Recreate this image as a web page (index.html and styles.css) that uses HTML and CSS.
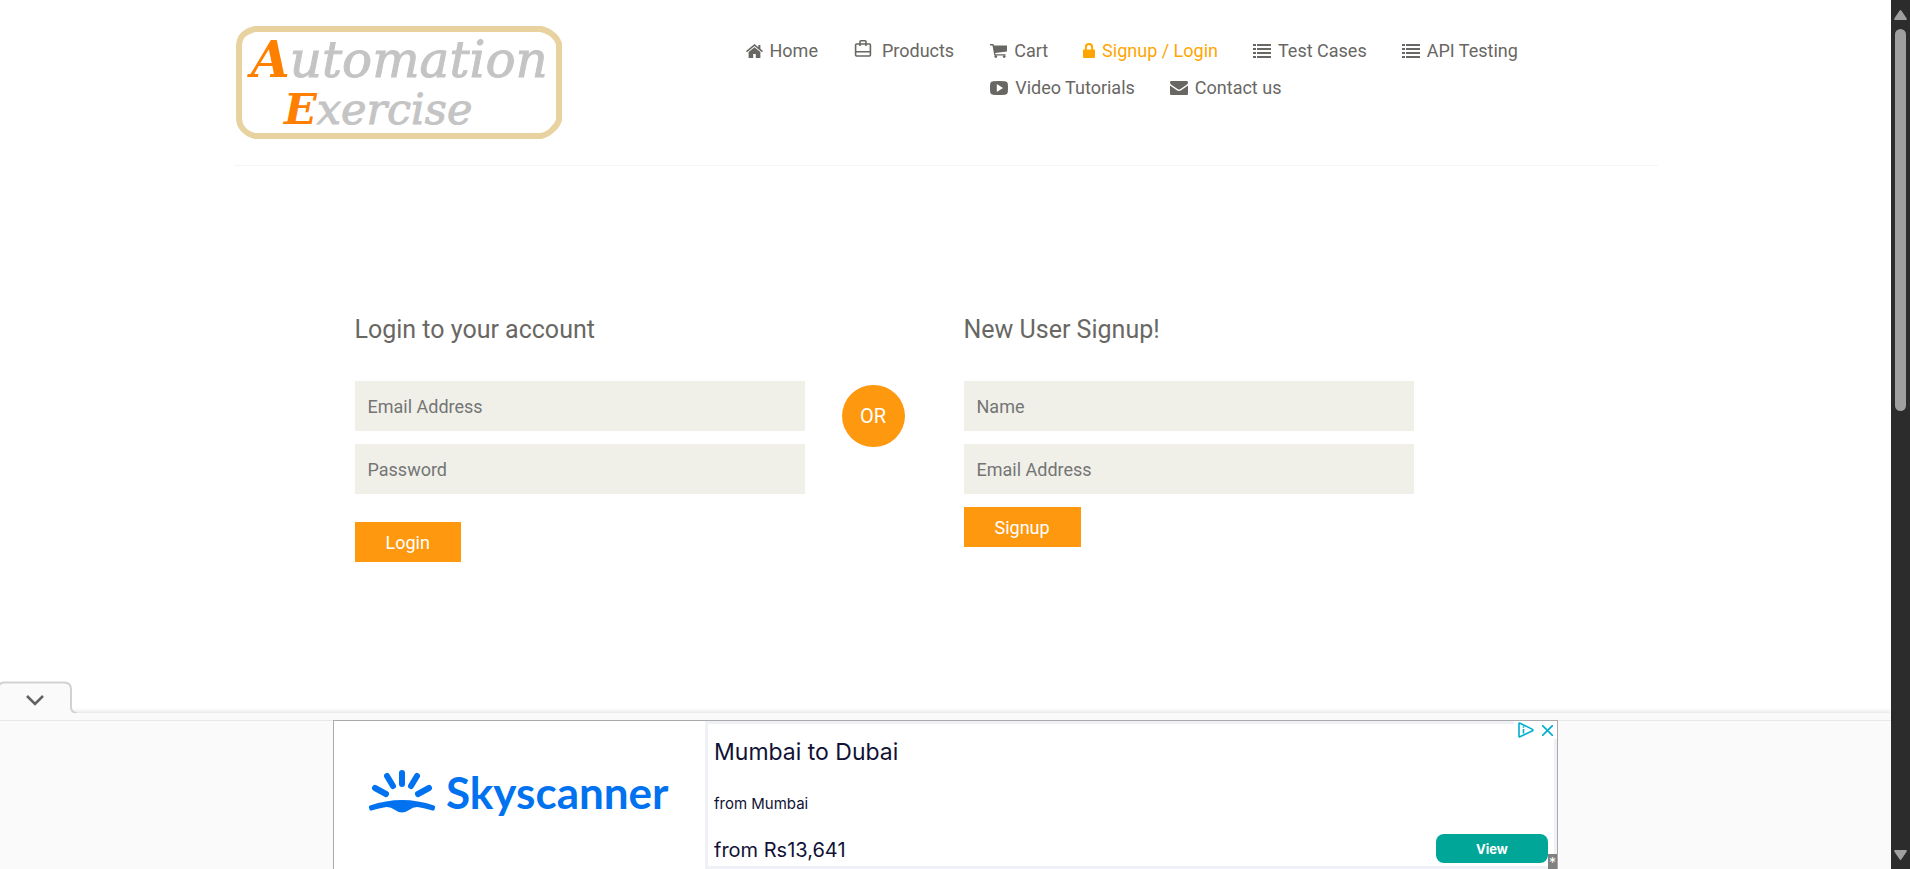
FILE: index.html
```html
<!DOCTYPE html>
<html lang="en">
<head>
<meta charset="utf-8">
<meta name="viewport" content="width=device-width, initial-scale=1">
<title>Automation Exercise - Signup / Login</title>
<link rel="stylesheet" href="styles.css">
</head>
<body>
<svg class="sprite" aria-hidden="true">
  <symbol id="i-list" viewBox="0 0 18 14"><path d="M0 0h3v2H0zM4 0h14v2H4zM0 4h3v2H0zM4 4h14v2H4zM0 8h3v2H0zM4 8h14v2H4zM0 12h3v2H0zM4 12h14v2H4z"/></symbol>
</svg>
<div class="window">
  <div class="page">
    <header class="header container">
      <a class="logo" href="#" aria-label="Automation Exercise">
        <svg width="329" height="115" viewBox="0 0 329 115">
          <path class="logo-frame" d="M21 4h286q8 2 12 6 4 3 6 9v76q-2 6-6 9-4 5-12 7H21q-8-2-12-7-4-4-4-12V22q0-8 4-12 4-4 12-6z"/>
          <text class="logo-text logo-text-top" x="17" y="52"><tspan class="logo-initial">A</tspan>utomation</text>
          <text class="logo-text logo-text-bottom" x="50" y="99"><tspan class="logo-initial">E</tspan>xercise</text>
        </svg>
      </a>
      <nav class="nav">
        <a href="#"><svg width="17" height="14" viewBox="0 0 17 14"><path d="M8.500 0 0 7l1 1.200L8.500 2l7.500 6.200L17 7l-2.600-2.200V1h-2v2.200z"/><path d="M8.500 3.200 2.600 8v6h4.600v-4h2.600v4h4.600V8z"/></svg>Home</a>
        <a href="#" class="nav-products"><svg width="18" height="17" viewBox="0 0 18 17"><path fill="none" stroke="currentColor" stroke-width="1.600" d="M2.500 4h13q.9 0 .9.900v10.200q0 .9-.9.900h-13q-.9 0-.9-.9V4.900q0-.9.900-.9zM6 6V1.800q0-1 1-1h4q1 0 1 1V6M1.600 11.800h14.800"/></svg>Products</a>
        <div class="nav-group">
          <div class="nav-row">
            <a href="#"><svg width="17" height="14" viewBox="0 0 17 14"><path d="M0 0h3.500l.4 1.500H17v6L5.200 9l.3 1.200H15.500v1.300H4.300L2.500 1.400H0z"/><circle cx="5.800" cy="12.600" r="1.400"/><circle cx="14.200" cy="12.600" r="1.400"/></svg>Cart</a>
            <a href="#" class="active"><svg width="12" height="15" viewBox="0 0 12 15"><path d="M1.900 6.500V4.200a4.100 4.100 0 0 1 8.200 0v2.300h1q.9 0 .9.900v6.700q0 .9-.9.900H.9q-.9 0-.9-.9V7.400q0-.9.9-.9zm2 0h4.200V4.200a2.100 2.100 0 0 0-4.200 0z"/></svg>Signup / Login</a>
            <a href="#"><svg width="18" height="14"><use href="#i-list"/></svg>Test Cases</a>
            <a href="#"><svg width="18" height="14"><use href="#i-list"/></svg>API Testing</a>
          </div>
          <div class="nav-row">
            <a href="#"><svg width="18" height="14" viewBox="0 0 18 14"><path fill-rule="evenodd" d="M3 .2Q9-.2 15 .2q2.600.2 2.800 2.600.4 4.200 0 8.400-.2 2.400-2.800 2.600-6 .4-12 0Q.4 13.600.2 11.200q-.4-4.200 0-8.400Q.4.400 3 .2zM6.800 3v8L13 7z"/></svg>Video Tutorials</a>
            <a href="#"><svg width="18" height="14" viewBox="0 0 18 14"><path d="M1 0h16Q18 0 18 1.500q0 1.300-1.300 2.300L10.500 8q-1.500 1-3 0L1.300 3.800Q0 2.800 0 1.500 0 0 1 0zM0 4.600l6.800 4.700q2.200 1.400 4.400 0L18 4.600v7.900q0 1.500-1 1.500h-16Q0 14 0 12.500z"/></svg>Contact us</a>
          </div>
        </div>
      </nav>
    </header>

    <main class="container">
      <div class="forms">
        <form class="form login">
          <h2>Login to your account</h2>
          <input type="email" placeholder="Email Address" aria-label="Email Address">
          <input type="password" placeholder="Password" aria-label="Password">
          <button type="button">Login</button>
        </form>
        <div class="or">OR</div>
        <form class="form">
          <h2>New User Signup!</h2>
          <input type="text" placeholder="Name" aria-label="Name">
          <input type="email" placeholder="Email Address" aria-label="Email Address">
          <button type="button">Signup</button>
        </form>
      </div>
    </main>

    <section class="anchor" aria-label="Advertisement">
      <button class="anchor-tab" type="button" aria-label="Hide advertisement">
        <svg width="80" height="40" viewBox="0 0 80 40"><path class="tab-shape" d="M-1 9Q0 5.500 4 5.500h60q7 0 7 7V30q0 5 5 6v4H-1z"/><path class="tab-arrow" d="m27 19 8 8 8-8"/></svg>
      </button>
      <div class="anchor-strip"></div>
      <div class="anchor-body">
        <div class="ad">
          <a class="ad-brand" href="#" aria-label="Skyscanner">
            <svg width="350" height="148" viewBox="0 0 350 148">
              <g class="rays"><path d="M61 52V63"/><path d="m46 55 6 10"/><path d="m76 55-6 10"/><path d="m34 67 11 6"/><path d="m88 67-11 6"/></g>
              <path class="brand-fill" d="M29 84.500Q45 79 61 79t32 5.500q1.500.5 1 2l-.6 2.400q-.6 1-2 .6Q82 86.500 76 86q-4 0-8 3-4 2.500-7 2.500T54 89q-4-3-8-3-6 .5-15.400 3.500-1.400.4-2-.6L28 86.500q-.5-1.500 1-2z"/>
              <text class="brand-text" x="105" y="88">Skyscanner</text>
            </svg>
          </a>
          <div class="ad-offer">
            <p class="offer-title">Mumbai to Dubai</p>
            <p class="offer-from">from Mumbai</p>
            <p class="offer-price">from Rs13,641</p>
            <button class="offer-view" type="button">View</button>
            <div class="ad-choices">
              <svg width="16" height="16" viewBox="0 0 16 16"><path d="M1 1.500v13q0 .8 1 .3l12.500-6q1-.7 0-1.400L2 1.200Q1 .8 1 1.500z"/><path d="M5.500 7v4.500M5.500 4.300v1.500"/></svg>
              <svg width="11" height="11" viewBox="0 0 11 11"><path d="m0 0 11 11M11 0 0 11"/></svg>
            </div>
            <span class="ad-mark">*</span>
          </div>
        </div>
      </div>
    </section>
  </div>
  <div class="scrollbar" aria-hidden="true">
    <svg width="13" height="10" viewBox="0 0 13 10"><path d="M6.500 0q.6 0 1 .7l5.200 7.800q.6 1.500-.8 1.500H1.100Q-.3 10 .3 8.500L5.500.7q.4-.7 1-.7z"/></svg>
    <div class="track"><div class="thumb"></div></div>
    <svg width="13" height="10" viewBox="0 0 13 10"><path d="M6.500 10q.6 0 1-.7l5.200-7.800Q13.300 0 11.900 0H1.100Q-.3 0 .3 1.500l5.200 7.800q.4.700 1 .7z"/></svg>
  </div>
</div>
</body>
</html>
```
FILE: styles.css
```css
* { box-sizing: border-box; }
body { margin: 0; background: #fff; color: #696763; font-family: Roboto, "Liberation Sans", sans-serif; font-size: 18px; }
a { color: inherit; text-decoration: none; }
h2, p { margin: 0; font-weight: 400; }
button { border: 0; padding: 0; font: inherit; cursor: pointer; }
.sprite { position: absolute; width: 0; height: 0; }

.window { display: flex; min-height: 100vh; }
.page { flex: 1; min-width: 0; display: flex; flex-direction: column; }
.container { width: 100%; max-width: 1424px; margin: 0 auto; }

.header { display: flex; align-items: flex-start; padding: 25px 0; border-bottom: 1px solid #f5f5f5; }
.logo svg { display: block; }
.logo-frame { fill: none; stroke: #e8d2a0; stroke-width: 6; }
.logo-text { font-family: "DejaVu Serif", serif; font-style: italic; fill: #c4c4c4; stroke: #c4c4c4; stroke-width: 1; }
.logo-text-top { font-size: 50px; }
.logo-text-bottom { font-size: 43px; }
.logo-initial { fill: #ff8000; stroke: none; font-weight: 700; }

.nav { display: flex; gap: 36px; padding-top: 7px; margin-left: 183px; white-space: nowrap; line-height: 37px; }
.nav a { display: flex; align-items: center; gap: 7px; height: 37px; }
.nav svg { fill: currentColor; flex: none; }
.nav .active { color: #ffa500; }
.nav .nav-products { gap: 10px; }
.nav-products svg { margin-bottom: 4px; }
.nav-row { display: flex; gap: 35px; }

.forms { display: flex; align-items: flex-start; max-width: 1180px; margin-top: 150px; padding-left: 121px; }
.form { flex: 1; display: flex; flex-direction: column; align-items: flex-start; }
.form h2 { font-size: 25px; line-height: 28px; margin-bottom: 37px; }
.form input { width: 100%; height: 50px; margin-bottom: 13px; padding: 0 13px; border: 0; border-radius: 0; background: #f0f0e9; color: #696763; font: inherit; }
.form input::placeholder { color: #757575; opacity: 1; }
.form button { height: 40px; padding: 0 31px; background: #fe980f; color: #fff; }
.login button { margin-top: 15px; }
.or { flex: none; width: 63px; height: 62px; margin: 69px 59px 0 37px; border-radius: 50%; background: #fe980f; color: #fff; font-size: 20px; line-height: 62px; text-align: center; }

.anchor { margin-top: auto; position: relative; }
.anchor-tab { position: absolute; left: 0; bottom: 100%; height: 32px; background: none; overflow: hidden; }
.anchor-tab svg { display: block; margin-top: -4px; }
.tab-shape { fill: #fafafa; stroke: #d2d2d2; stroke-width: 2; }
.tab-arrow { fill: none; stroke: #616161; stroke-width: 2.5; }
.anchor-strip { height: 8px; background: #fafafa; border-bottom: 1px solid #e8e8e8; box-shadow: 0 -1px 5px rgba(0, 0, 0, .14); }
.anchor-body { display: flex; justify-content: center; background: #fafafa; }
.ad { display: flex; flex: 0 1 1225px; height: 149px; margin-top: -1px; position: relative; background: #fff; border: 1px solid #aaa; border-bottom: 0; }
.ad-brand { flex: none; width: 371px; }
.ad-brand svg { display: block; margin-left: 7px; }
.rays { stroke: #0072f0; stroke-width: 6; stroke-linecap: round; }
.brand-fill { fill: #0072f0; }
.brand-text { fill: #0072f0; font: 700 44px Lato, sans-serif; }
.ad-offer { flex: 1; position: relative; padding: 12px 6px; border: 3px solid #f0f1f7; color: #111236; font-family: Inter, sans-serif; }
.offer-title { font-size: 23px; line-height: 32px; }
.offer-from { font-size: 15px; line-height: 20px; margin: 26px 0; }
.offer-price { font-size: 20px; line-height: 20px; }
.offer-view { position: absolute; right: 6px; bottom: 3px; width: 112px; height: 29px; border-radius: 8px; background: #00a698; color: #fff; font-size: 13px; font-weight: 700; }
.ad-choices { position: absolute; right: -3px; top: -3px; display: flex; align-items: center; gap: 8px; padding: 1px 4px; background: #fff; }
.ad-choices svg { fill: none; stroke: #00aecd; stroke-width: 1.6; }
.ad-mark { position: absolute; right: -3px; bottom: -3px; width: 9px; height: 15px; background: #808080; color: #fff; font-size: 14px; line-height: 18px; text-align: center; }

.scrollbar { flex: none; width: 19px; display: flex; flex-direction: column; align-items: center; gap: 9px; padding: 10px 0 9px; background: #2c2c2c; }
.scrollbar svg { fill: #9f9f9f; flex: none; }
.track { flex: 1; width: 11px; }
.thumb { height: 47%; border-radius: 6px; background: #9f9f9f; }
```
